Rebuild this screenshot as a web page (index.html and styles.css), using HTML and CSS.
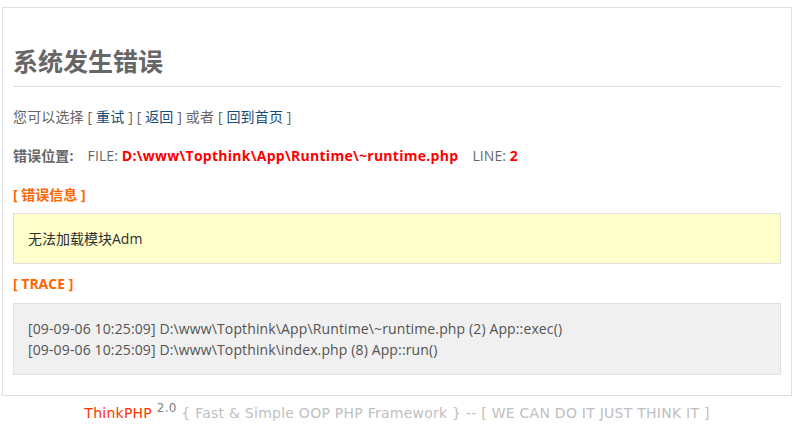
FILE: index.html
```html
<!DOCTYPE html>
<html lang="zh-CN">
<head>
<meta charset="utf-8">
<title>系统发生错误</title>
<link rel="stylesheet" href="styles.css">
</head>
<body>
<div class="notice">
  <h2>系统发生错误</h2>
  <div class="choice">您可以选择 [ <a href="#">重试</a> ] [ <a href="#">返回</a> ] 或者 [ <a href="#">回到首页</a> ]</div>
  <p class="where"><strong>错误位置:</strong>　FILE: <span class="red">D:\www\Topthink\App\Runtime\~runtime.php</span>　LINE: <span class="red">2</span></p>
  <p class="title">[ 错误信息 ]</p>
  <p class="message">无法加载模块Adm</p>
  <p class="title title-trace">[ TRACE ]</p>
  <p class="trace">[09-09-06 10:25:09] D:\www\Topthink\App\Runtime\~runtime.php (2) App::exec()<br>[09-09-06 10:25:09] D:\www\Topthink\index.php (8) App::run()</p>
</div>
<div class="footer">ThinkPHP <sup class="ver">2.0</sup><span class="slogan"> { Fast &amp; Simple OOP PHP Framework } -- [ WE CAN DO IT JUST THINK IT ]</span></div>
</body>
</html>
```
FILE: styles.css
```css
html, body {
  margin: 0;
  padding: 0;
  background: #fff;
}
body {
  font-family: "Open Sans", "Noto Sans CJK SC", sans-serif;
  font-size: 14px;
  line-height: 21px;
  color: #666;
}
a {
  text-decoration: none;
  color: #174B73;
}
.notice {
  margin: 7px 6px 0 2px;
  padding: 10px;
  border: 1px solid #E0E0E0;
  background: #fff;
}
h2 {
  margin: 20px 0 19px;
  padding: 8px 0 9px;
  font-size: 25px;
  line-height: 31px;
  font-weight: bold;
  color: #666;
  border-bottom: 1px solid #DDD;
}
.choice {
  margin: 0;
  letter-spacing: 0.15px;
}
.where {
  margin: 18px 0;
  letter-spacing: 0.1px;
}
.where strong {
  font-weight: bold;
}
.red {
  color: red;
  font-weight: bold;
  letter-spacing: 0.27px;
}
.title {
  margin: 17px 0 8px;
  color: #F60;
  font-weight: bold;
}
.title-trace {
  margin: 9px 0;
}
.message, .trace {
  margin: 8px 0;
  padding: 14px;
  line-height: 21px;
  border: 1px solid #E0E0E0;
}
.message {
  background: #FFFFCC;
  color: #2E2E2E;
}
.trace {
  background: #F0F0F0;
  color: #535353;
  margin: 9px 0 10px;
  letter-spacing: 0.13px;
}
.footer {
  margin: 3px 6px 0 2px;
  text-align: center;
  font-family: "DejaVu Sans", Verdana, sans-serif;
  font-size: 14px;
  line-height: 18px;
  letter-spacing: 0.25px;
  color: #FF3300;
}
.ver {
  color: gray;
  font-size: 9pt;
}
.slogan {
  color: silver;
}
```
